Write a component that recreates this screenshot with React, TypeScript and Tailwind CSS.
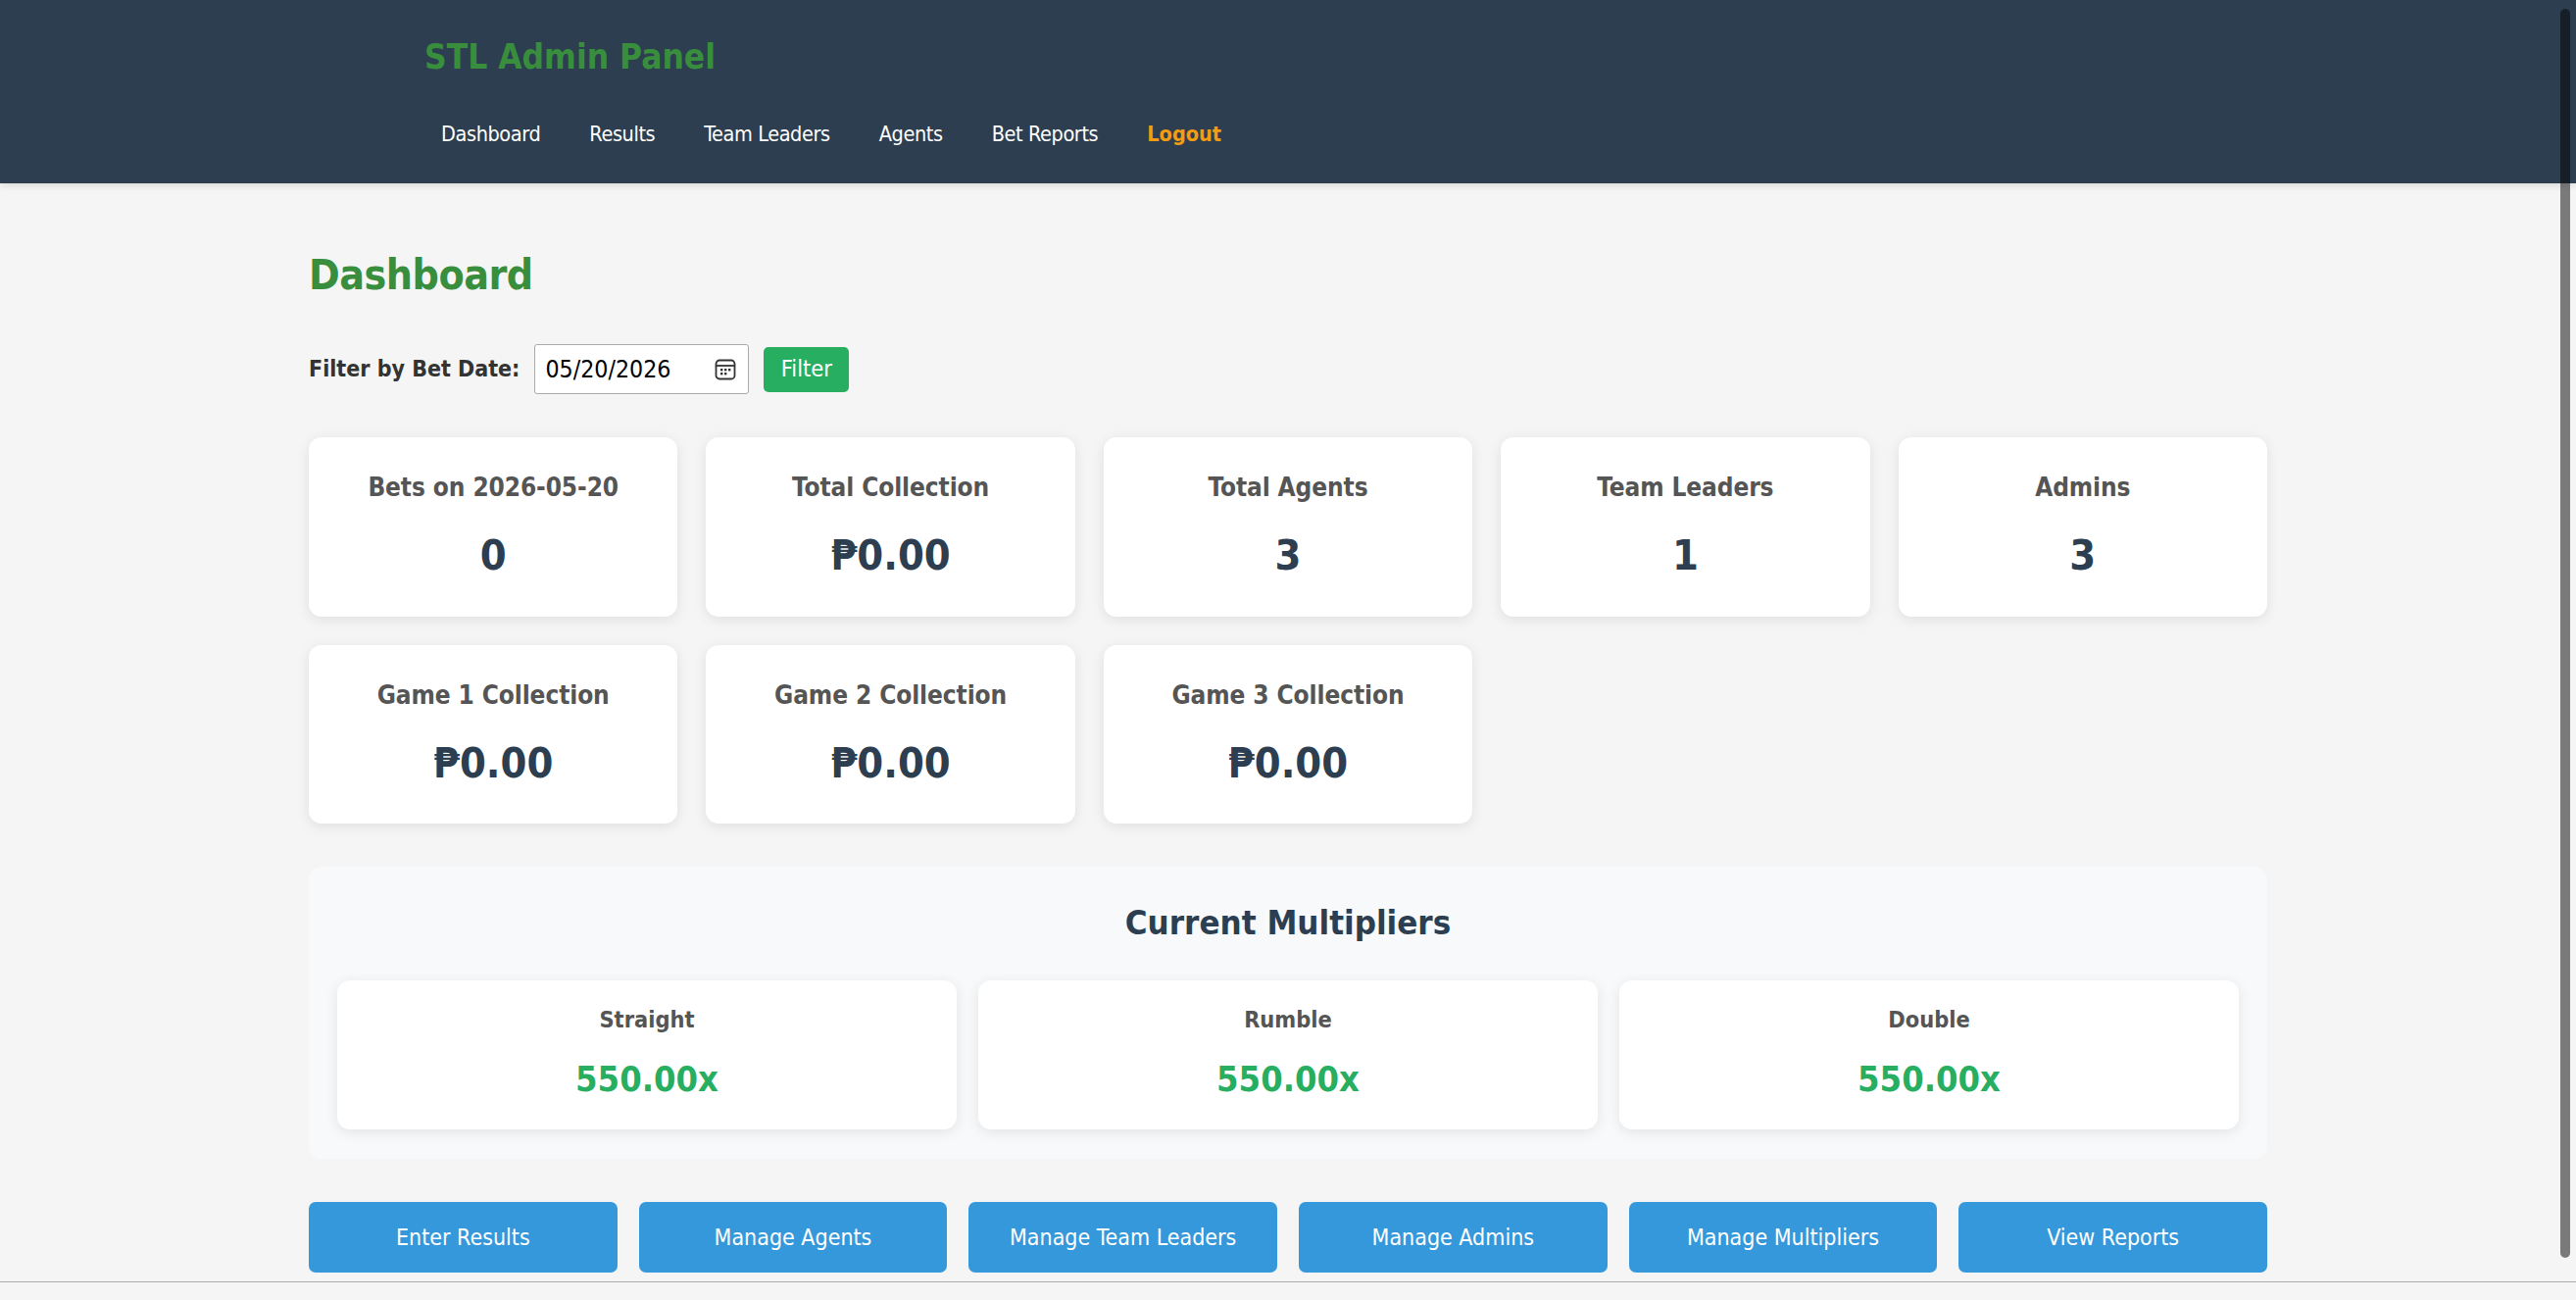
const font = "[font-family:'DejaVu_Sans_Condensed','DejaVu_Sans',sans-serif]";

function Card({ label, value }: { label: string; value: string }) {
  return (
    <div className="h-[182.5px] rounded-[13px] bg-white flex flex-col items-center pt-[34px] shadow-[0_3px_14px_rgba(0,0,0,0.09)]">
      <div className="text-[26px] leading-[34px] font-bold tracking-[-0.1px] text-[#555]">{label}</div>
      <div className="mt-[24px] text-[43px] leading-[56px] font-bold text-[#2c3e50]">{value}</div>
    </div>
  );
}

function Multiplier({ label, value }: { label: string; value: string }) {
  return (
    <div className="h-[152px] rounded-[13px] bg-white flex flex-col items-center pt-[25px] shadow-[0_3px_14px_rgba(0,0,0,0.09)]">
      <div className="text-[23.4px] leading-[30px] font-bold text-[#555]">{label}</div>
      <div className="mt-[23px] text-[36px] leading-[46px] font-bold text-[#27ae60]">{value}</div>
    </div>
  );
}

export default function App() {
  const navs = ["Dashboard", "Results", "Team Leaders", "Agents", "Bet Reports"];
  const top = [
    ["Bets on 2026-05-20", "0"],
    ["Total Collection", "₱0.00"],
    ["Total Agents", "3"],
    ["Team Leaders", "1"],
    ["Admins", "3"],
  ];
  const games = [
    ["Game 1 Collection", "₱0.00"],
    ["Game 2 Collection", "₱0.00"],
    ["Game 3 Collection", "₱0.00"],
  ];
  const mults = ["Straight", "Rumble", "Double"];
  const btns = ["Enter Results", "Manage Agents", "Manage Team Leaders", "Manage Admins", "Manage Multipliers", "View Reports"];
  return (
    <div className={`${font} relative h-[1326px] overflow-hidden bg-[#f5f5f5] flex flex-col`}>
      <div className="h-[1307px] overflow-hidden">
        <header className="h-[187px] bg-[#2c3e50] pl-[433px] pt-[36px] shadow-[0_2px_8px_rgba(0,0,0,0.12)]">
          <div className="text-[35px] leading-[44px] font-bold text-[#388e3c]">STL Admin Panel</div>
          <nav className="mt-[42px] pl-[17px] flex gap-[50px] text-[21.5px] leading-[30px] tracking-[-0.4px] text-white">
            {navs.map((n) => (
              <span key={n}>{n}</span>
            ))}
            <span className="font-bold tracking-normal text-[#f39c12]">Logout</span>
          </nav>
        </header>
        <main className="w-[1998px] ml-[315px] pt-[66px]">
          <h1 className="text-[42.5px] leading-[56px] font-bold tracking-[-0.5px] text-[#388e3c]">Dashboard</h1>
          <div className="mt-[42px] flex items-center h-[51px]">
            <span className="text-[23px] font-bold text-[#333]">Filter by Bet Date:</span>
            <div className="ml-[15px] w-[219px] h-[51px] flex items-center justify-between pl-[10px] pr-[12px] bg-white border border-[#aaa] rounded-[3px] text-[24.7px] text-black">
              <span>05/20/2026</span>
              <svg width="22" height="22" viewBox="0 0 22 22" fill="none" stroke="#333" strokeWidth="1.8">
                <rect x="1.5" y="1.5" width="19" height="19" rx="3.5" />
                <path d="M1.5 7h19" />
                <g fill="#333" stroke="none">
                  <rect x="6" y="10" width="2.4" height="2.4" />
                  <rect x="10" y="10" width="2.4" height="2.4" />
                  <rect x="14" y="10" width="2.4" height="2.4" />
                  <rect x="6" y="14" width="2.4" height="2.4" />
                  <rect x="10" y="14" width="2.4" height="2.4" />
                </g>
              </svg>
            </div>
            <button className="ml-[15px] w-[87px] h-[46px] rounded-[5px] bg-[#27ae60] text-white text-[23.5px]">Filter</button>
          </div>
          <section className="mt-[44px] grid grid-cols-5 gap-[29px]">
            {top.map(([l, v]) => (
              <Card key={l} label={l} value={v} />
            ))}
            {games.map(([l, v]) => (
              <Card key={l} label={l} value={v} />
            ))}
          </section>
          <section className="mt-[44px] h-[298px] rounded-[13px] bg-[#f8f9fa] px-[29px] pt-[33px]">
            <h2 className="text-center text-[34.6px] leading-[48px] font-bold text-[#2c3e50]">Current Multipliers</h2>
            <div className="mt-[35px] grid grid-cols-3 gap-[22px]">
              {mults.map((m) => (
                <Multiplier key={m} label={m} value="550.00x" />
              ))}
            </div>
          </section>
          <section className="mt-[44px] grid grid-cols-6 gap-[22px]">
            {btns.map((b) => (
              <button key={b} className="h-[72px] rounded-[7px] bg-[#3498db] text-white text-[23px]">
                {b}
              </button>
            ))}
          </section>
        </main>
      </div>
      <div className="flex-1 border-t border-[#aaa]" />
      <div className="absolute left-[2612px] top-[9px] w-[10px] h-[1274px] rounded-full bg-black/50" />
    </div>
  );
}
